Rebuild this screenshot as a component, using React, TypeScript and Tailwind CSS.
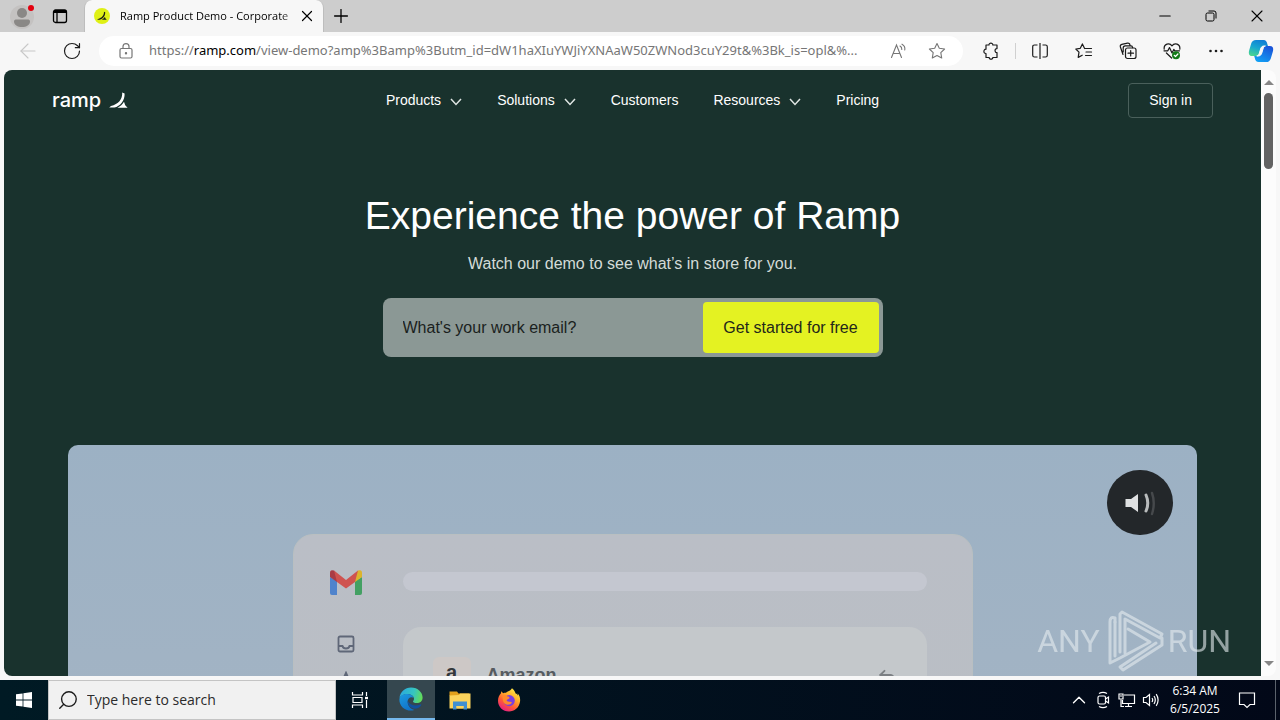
import type { ReactNode } from "react";
import { ArrowLeft, ChevronUp, Minus, Plus, Reply, RotateCw, Search, X } from "lucide-react";

interface NavItem {
  label: string;
  hasMenu: boolean;
}

const navItems: NavItem[] = [
  { label: "Products", hasMenu: true },
  { label: "Solutions", hasMenu: true },
  { label: "Customers", hasMenu: false },
  { label: "Resources", hasMenu: true },
  { label: "Pricing", hasMenu: false },
];

function IconButton({ label, className = "", children }: { label: string; className?: string; children: ReactNode }) {
  return (
    <button type="button" aria-label={label} className={`flex shrink-0 items-center justify-center ${className}`}>
      {children}
    </button>
  );
}

/* The bird-like mark used in the logo and the tab icon */
function RampMark({ className }: { className: string }) {
  return (
    <svg viewBox="0 0 19 17" className={className} fill="currentColor" aria-hidden="true">
      <path d="M13.2 0.6L15.6 1.4C16 8.6 11 14 5.4 15.6H0.2L2 14C9.4 12.4 13.6 7.4 13.2 0.6Z" />
      <path d="M15 9.8L16.2 13.2L18.6 15.8H8.4C11.4 14.4 13.6 12.4 15 9.8Z" />
    </svg>
  );
}

function TabBar() {
  return (
    <div className="flex h-8 shrink-0 items-stretch bg-[#cdcdcd] text-black">
      <IconButton label="Profile" className="w-11">
        <svg viewBox="0 0 28 28" className="h-7 w-7" aria-hidden="true">
          <circle cx="14" cy="15" r="12" fill="#c4c2c1" />
          <circle cx="14" cy="11" r="5" fill="#8a8886" />
          <path d="M6 19.5C6 18 7 17.5 8.5 17.5H19.5C21 17.5 22 18 22 19.5C22 23 18.5 25 14 25S6 23 6 19.5Z" fill="#8a8886" />
          <circle cx="23" cy="6" r="3" fill="#e3000f" />
        </svg>
      </IconButton>
      <IconButton label="Tab actions" className="w-8">
        <svg viewBox="0 0 16 16" className="h-4 w-4" fill="none" stroke="currentColor" aria-hidden="true">
          <rect x="1.5" y="2" width="13" height="12.5" rx="2" strokeWidth="1.3" />
          <path d="M2 3.5H14" strokeWidth="3" />
          <path d="M5 4V14" strokeWidth="1.3" />
        </svg>
      </IconButton>
      <div className="ml-2 flex w-60 items-center rounded-t-lg border-x border-[#bdbdbd] bg-[#f7f7f7] pl-[9px] pr-1">
        <span className="flex h-4 w-4 shrink-0 items-center justify-center rounded-full bg-[#dff016]">
          <RampMark className="h-2.5 w-2.5 text-[#1a1a1a]" />
        </span>
        <span className="ml-2.5 flex-1 whitespace-nowrap bg-linear-to-r from-black from-90% to-[#c0c0c0] bg-clip-text text-[11px] text-transparent">
          Ramp Product Demo - Corporate
        </span>
        <IconButton label="Close tab" className="h-6 w-6">
          <X className="h-[18px] w-[18px]" strokeWidth={1.6} />
        </IconButton>
      </div>
      <IconButton label="New tab" className="ml-px w-8">
        <Plus className="h-[22px] w-[22px]" strokeWidth={1.4} />
      </IconButton>
      <div className="ml-auto flex">
        <IconButton label="Minimize" className="w-[46px]">
          <Minus className="h-[18px] w-[18px]" strokeWidth={1.4} />
        </IconButton>
        <IconButton label="Restore" className="w-[46px]">
          <svg viewBox="0 0 12 12" className="h-3 w-3" fill="none" stroke="currentColor" aria-hidden="true">
            <rect x="1" y="3" width="8" height="8" rx="1.5" />
            <path d="M3.5 1H9Q11 1 11 3V8.5" />
          </svg>
        </IconButton>
        <IconButton label="Close window" className="w-[46px]">
          <X className="h-5 w-5" strokeWidth={1.3} />
        </IconButton>
      </div>
    </div>
  );
}

function StarOutline({ className, lines = false }: { className: string; lines?: boolean }) {
  return (
    <svg viewBox="0 0 18 18" className={className} fill="none" stroke="currentColor" strokeLinejoin="round" strokeLinecap="round" aria-hidden="true">
      {lines ? (
        <path d="M9.6 6.5L7.4 1.9L5.3 6.3L0.8 7L4 10.2L3.2 15.4L7.2 13.2M9.6 6.5H16.5M11 10H16.5M10.5 13.5H16.5" strokeWidth="1.2" />
      ) : (
        <path d="M9 1.5L11.3 6.3L16.6 7L12.8 10.7L13.7 16L9 13.5L4.3 16L5.2 10.7L1.4 7L6.7 6.3Z" strokeWidth="1.1" />
      )}
    </svg>
  );
}

function CopilotLogo() {
  return (
    <svg viewBox="0 0 26 24" className="h-6 w-[26px]" aria-hidden="true">
      <defs>
        <linearGradient id="copilotLeft" x1="0.6" y1="0" x2="0.2" y2="1">
          <stop offset="0" stopColor="#0f7fd6" />
          <stop offset="0.5" stopColor="#18a8cf" />
          <stop offset="1" stopColor="#4bd68f" />
        </linearGradient>
        <linearGradient id="copilotRight" x1="0.8" y1="0" x2="0.2" y2="1">
          <stop offset="0" stopColor="#1a52d8" />
          <stop offset="1" stopColor="#12a2f5" />
        </linearGradient>
      </defs>
      <path d="M8 1H15.5C18 1 18.8 3 19.4 5.2L20 7H16C13.8 7 13 8.6 12.4 10.8L11.2 14.8C10.6 16.6 9.6 17 8 17H4C0.8 17 0.4 14 1.2 11.2L3.2 4.6C4 2.2 5.4 1 8 1Z" fill="url(#copilotLeft)" />
      <path d="M18 23H10.8C8.2 23 7.4 21.4 6.8 19L6.2 17H10C12.2 17 13 15.6 13.6 13.4L14.8 9.2C15.4 7.4 16.4 7 18 7H22C25.4 7 25.6 10 24.8 12.8L22.8 19.4C22 21.8 20.6 23 18 23Z" fill="url(#copilotRight)" />
      <path d="M16 7H17.4C16 7.4 15.4 8.4 15 10L13.8 14C13.2 16 12 17 10 17H8.8C10.2 16.8 10.8 15.8 11.2 14.6L12.6 10C13.2 8 14.2 7 16 7Z" fill="#f7f7f7" stroke="#f7f7f7" />
    </svg>
  );
}

function Toolbar() {
  return (
    <div className="flex h-[38px] shrink-0 items-center bg-[#f7f7f7] text-[#1b1b1b]">
      <IconButton label="Back" className="ml-1.5 w-11 text-[#c8c8c8]">
        <ArrowLeft className="h-6 w-6" strokeWidth={1.1} />
      </IconButton>
      <IconButton label="Refresh" className="w-11">
        <RotateCw className="h-5 w-5" strokeWidth={1.4} />
      </IconButton>
      <div className="ml-[5px] flex h-[30px] min-w-0 flex-1 items-center rounded-full bg-white pl-[18px] pr-2 text-[#767676]">
        <svg viewBox="0 0 18 18" className="h-[18px] w-[18px] shrink-0" fill="none" stroke="currentColor" strokeWidth="1.2" aria-hidden="true">
          <rect x="3" y="6.5" width="12" height="9.5" rx="1.5" />
          <path d="M6 6.5V4.5C6 0.6 12 0.6 12 4.5V6.5" />
          <circle cx="9" cy="11.2" r="0.6" fill="currentColor" />
        </svg>
        <div className="ml-3.5 min-w-0 flex-1 overflow-hidden whitespace-nowrap font-['Noto_Sans',sans-serif] text-[13px]">
          https://<span className="text-black">ramp.com</span>
          /view-demo?amp%3Bamp%3Butm_id=dW1haXIuYWJiYXNAaW50ZWNod3cuY29t&amp;%3Bk_is=opl&amp;%...
        </div>
        <IconButton label="Read aloud" className="h-6 w-10">
          <svg viewBox="0 0 18 18" className="h-[18px] w-[18px]" fill="none" stroke="currentColor" strokeWidth="1.1" strokeLinecap="round" aria-hidden="true">
            <path d="M1.5 15.5L6.5 3L11.5 15.5M3 11.5H10" />
            <path d="M10 4Q12 5 11.8 7.5M12 2.2Q15.4 4 14.8 8" />
          </svg>
        </IconButton>
        <IconButton label="Add to favorites" className="h-6 w-9">
          <StarOutline className="h-[18px] w-[18px]" />
        </IconButton>
      </div>
      <IconButton label="Extensions" className="ml-1.5 w-11">
        <svg viewBox="0 0 18 18" className="h-[18px] w-[18px]" fill="none" stroke="currentColor" strokeWidth="1.2" strokeLinejoin="round" aria-hidden="true">
          <path d="M4 3H7C6.8 0.6 11 0.6 10.8 3H15V6.6C12.4 6.4 12.4 10.8 15 10.6V15.5H10.8C11 17.6 7 17.6 7.2 15.5H4V11.5C1.2 11.8 1.2 7 4 7.2Z" />
        </svg>
      </IconButton>
      <span className="mx-0.5 h-4 w-px bg-[#d0d0d0]" />
      <IconButton label="Split screen" className="w-11">
        <svg viewBox="0 0 18 18" className="h-[18px] w-[18px]" fill="none" stroke="currentColor" strokeWidth="1.2" aria-hidden="true">
          <path d="M6.5 3H3.5Q1.7 3 1.7 4.8V13.2Q1.7 15 3.5 15H6.5M11.5 3H14.5Q16.3 3 16.3 4.8V13.2Q16.3 15 14.5 15H11.5M9 1V17" />
        </svg>
      </IconButton>
      <IconButton label="Favorites" className="w-11">
        <StarOutline className="h-[18px] w-[18px]" lines />
      </IconButton>
      <IconButton label="Collections" className="w-11">
        <svg viewBox="0 0 18 18" className="h-[18px] w-[18px]" fill="none" stroke="currentColor" strokeWidth="1.2" strokeLinecap="round" aria-hidden="true">
          <rect x="6.5" y="6" width="10.5" height="10.5" rx="2" />
          <path d="M11.7 8.5V14M9 11.2H14.5M4 12.5L1.4 5Q0.8 3 2.8 2.4L8.5 1.2Q10.6 0.8 11 3.2M4.2 10V6Q4.2 3.8 6.2 3.8H12Q13.4 3.8 13.6 5.6" />
        </svg>
      </IconButton>
      <IconButton label="Browser essentials" className="w-11">
        <svg viewBox="0 0 18 18" className="h-[18px] w-[18px]" fill="none" stroke="currentColor" strokeWidth="1.2" strokeLinecap="round" strokeLinejoin="round" aria-hidden="true">
          <path d="M1.2 7.2C0.4 1.6 6.6 0.4 9 3.8C11.4 0.4 17.6 1.6 16.8 7.2M1 8.8H4.8L6.5 5.6L9 11L10.8 7.4L11.8 8.8H16.5M3.4 11L8.6 16" />
          <circle cx="13" cy="13.2" r="4" fill="#127a17" stroke="none" />
          <path d="M11.2 13.3L12.5 14.5L14.9 12" stroke="#fff" />
        </svg>
      </IconButton>
      <IconButton label="Settings and more" className="w-11">
        <svg viewBox="0 0 16 4" className="h-1 w-4" fill="currentColor" aria-hidden="true">
          <circle cx="2.5" cy="2" r="1.3" />
          <circle cx="8" cy="2" r="1.3" />
          <circle cx="13.5" cy="2" r="1.3" />
        </svg>
      </IconButton>
      <IconButton label="Copilot" className="w-[42px] pl-1">
        <CopilotLogo />
      </IconButton>
    </div>
  );
}

function SiteHeader() {
  return (
    <header className="grid h-[60px] grid-cols-[1fr_auto_1fr] items-center px-12 text-white">
      <a href="#" aria-label="Ramp home" className="flex items-center gap-2">
        <span className="font-['Inter',sans-serif] text-xl font-medium leading-6">ramp</span>
        <RampMark className="h-[17px] w-[19px]" />
      </a>
      <nav className="flex items-center gap-[35px] text-sm leading-6">
        {navItems.map((item) =>
          item.hasMenu ? (
            <button key={item.label} type="button" className="flex items-center gap-[9px]">
              {item.label}
              <svg viewBox="0 0 12 8" className="mt-1 h-2 w-3" fill="none" stroke="#dfe5e3" strokeWidth="1.5" aria-hidden="true">
                <path d="M1 1L6 6.5L11 1" />
              </svg>
            </button>
          ) : (
            <a key={item.label} href="#">
              {item.label}
            </a>
          ),
        )}
      </nav>
      <a href="#" className="justify-self-end rounded border border-[#4a605b] px-5 py-1.5 text-sm leading-[21px]">
        Sign in
      </a>
    </header>
  );
}

function Hero() {
  return (
    <section className="flex flex-col items-center pt-[62px] text-center">
      <h1 className="text-[39px] leading-[48px] text-white">Experience the power of Ramp</h1>
      <p className="mt-3 text-base leading-6 text-[#d3dbd8]">Watch our demo to see what’s in store for you.</p>
      <form className="mt-[22px] flex w-full max-w-[500px] rounded-lg bg-[#8b9895] p-1" onSubmit={(e) => e.preventDefault()}>
        <input
          type="email"
          aria-label="Work email"
          placeholder="What's your work email?"
          className="min-w-0 flex-1 px-4 text-base text-[#1a1f1d] outline-none placeholder:text-[#1a1f1d]"
        />
        <button type="submit" className="h-[51px] w-44 rounded bg-[#e4f222] text-base text-[#23271a]">
          Get started for free
        </button>
      </form>
    </section>
  );
}

function GmailLogo() {
  return (
    <svg viewBox="0 0 32 26" className="h-[26px] w-8" aria-hidden="true">
      <path d="M0 8L7 12V26H2Q0 26 0 24Z" fill="#4f83cc" />
      <path d="M32 8L25 12V26H30Q32 26 32 24Z" fill="#43a063" />
      <path d="M25 5L28 1.6Q32 0 32 4V8L25 13Z" fill="#dcb42c" />
      <path d="M0 8V4Q0 0 4 1.6L7 5V13Z" fill="#a93c46" />
      <path d="M4 1.6L16 11L28 1.6L25 13L16 19.5L7 13Z" fill="#cf5350" />
    </svg>
  );
}

function DemoVideo() {
  return (
    <section className="relative mx-16 mt-[88px] h-[640px] rounded-[10px] bg-linear-to-b from-[#9cb1c4] to-[#abb7c4]">
      <div className="flex justify-center pt-[89px]">
        <div className="flex h-[500px] w-[680px] rounded-[20px] border border-[#b9bfc1] bg-linear-to-b from-[#babec6] to-[#b9bfc2]">
          <div className="flex w-[109px] flex-col items-center pt-[34px] pr-1">
            <GmailLogo />
            <svg viewBox="0 0 18 18" className="mt-10 h-[18px] w-[18px]" fill="none" stroke="#5f6778" strokeWidth="1.8" aria-hidden="true">
              <rect x="1.5" y="1.5" width="15" height="15" rx="1.5" />
              <path d="M1.5 11H5.5Q6 13.5 9 13.5T12.5 11H16.5" />
            </svg>
            <svg viewBox="0 0 20 20" className="mt-[18px] h-5 w-5" fill="none" stroke="#5f6778" strokeWidth="2" aria-hidden="true">
              <path d="M10 2L12.4 7.4L18 8L13.8 12L15 18L10 15L5 18L6.2 12L2 8L7.6 7.4Z" />
            </svg>
          </div>
          <div className="mr-[45px] flex-1 pt-[37px]">
            <div className="h-[19px] rounded-full bg-[#c4c7d0]" />
            <div className="mt-9 flex h-80 items-start rounded-[18px] bg-[#c4c8cb] px-[30px] pt-[30px]">
              <span className="flex h-[38px] w-[38px] items-start justify-center rounded-md bg-[#cdc8c6] text-xl font-bold leading-[30px] text-[#33373b]">
                a
              </span>
              <span className="ml-4 mt-1 flex-1 text-lg font-bold leading-7 text-[#565b60]">Amazon</span>
              <Reply className="mt-2 h-5 w-5 text-[#7c8084]" strokeWidth={2.2} />
            </div>
          </div>
        </div>
      </div>
      <button
        type="button"
        aria-label="Mute"
        className="absolute right-6 top-[25px] flex h-[65px] w-[66px] items-center justify-center rounded-full bg-[#23272a]"
      >
        <svg viewBox="0 0 32 26" className="h-[26px] w-8" fill="none" strokeLinecap="round" strokeWidth="3" aria-hidden="true">
          <path d="M1.5 9H7L14 4V22L7 17H1.5Z" fill="#dfe1e2" />
          <path d="M22 5Q25.5 13 22 21" stroke="#b9bcbd" />
          <path d="M28 3Q31.5 13 28 24" stroke="#46494c" strokeWidth="2.4" />
        </svg>
      </button>
    </section>
  );
}

/* Sits over the lower right corner of the page */
function Watermark() {
  return (
    <div className="pointer-events-none absolute bottom-1 right-[45px] flex items-center text-[#e6edf0] opacity-60">
      <span className="font-['Roboto',sans-serif] text-[32px] leading-[60px]">ANY</span>
      <svg viewBox="0 0 56 62" className="ml-2 mr-1 h-[62px] w-14" fill="none" stroke="currentColor" strokeWidth="3" strokeLinejoin="round" strokeLinecap="round" aria-hidden="true">
        <path d="M7 12V8Q2 6 2 12V53L12 48L42 32L20 19" />
        <path d="M7 12V46" />
        <path d="M12 42V4L14 2L54 24L52 28L17 9V43" />
        <path d="M54 28V35L15 60L12 57L48 33" />
      </svg>
      <span className="font-['Roboto',sans-serif] text-[32px] leading-[60px]">RUN</span>
    </div>
  );
}

function Scrollbar() {
  return (
    <div className="flex w-[15px] shrink-0 flex-col items-center bg-[#fcfcfc] py-2.5">
      <span className="h-0 w-0 border-x-[5px] border-b-[5px] border-x-transparent border-b-[#868686]" />
      <span className="mt-2 h-[76px] w-[9px] rounded-full bg-[#636363]" />
      <span className="mt-auto h-0 w-0 border-x-[5px] border-t-[5px] border-x-transparent border-t-[#868686]" />
    </div>
  );
}

function EdgeLogo() {
  return (
    <svg viewBox="0 0 24 24" className="h-6 w-6" aria-hidden="true">
      <defs>
        <linearGradient id="edgeTop" x1="0" y1="0.3" x2="1" y2="0.5">
          <stop offset="0" stopColor="#2aa8e0" />
          <stop offset="0.6" stopColor="#36c5c0" />
          <stop offset="1" stopColor="#63dc58" />
        </linearGradient>
        <linearGradient id="edgeLow" x1="0" y1="0" x2="0.5" y2="1">
          <stop offset="0" stopColor="#1c9be0" />
          <stop offset="1" stopColor="#1173c9" />
        </linearGradient>
      </defs>
      <path d="M0.5 11C1.2 4.6 6 0.4 12 0.4C19 0.4 23.6 5.4 23.6 10.4C23.6 14 21 16 17.8 16C15.4 16 13.8 15.2 14 14.4C14.2 13.8 15 13.4 15 11.8C15 9.4 12.4 7 8.6 7C4.6 7 1.6 9 0.5 11Z" fill="url(#edgeTop)" />
      <path d="M0.4 12.4C0.6 8.8 4.4 7 8.2 7C11.4 7 14 8.6 14.6 10.8C11.8 9 8.6 11.2 8.6 14.8C8.6 19 12 22.4 15.4 23C13.8 23.6 12.6 23.6 12 23.6C5.4 23.6 0.2 18.6 0.4 12.4Z" fill="url(#edgeLow)" />
      <path d="M8.8 13.6C8 19 13 22.4 17.6 21.6C19.8 21 21.4 19.4 22.2 18.2C22.6 17.4 22 17 21.4 17.4C15.6 20 9.8 17.6 8.8 13.6Z" fill="#12509d" />
    </svg>
  );
}

function FolderLogo() {
  return (
    <svg viewBox="0 0 22 20" className="h-5 w-[22px]" aria-hidden="true">
      <path d="M0.5 1.5H8L9.5 3.5H20V6H0.5Z" fill="#e2a01c" />
      <path d="M0.5 5.5L10 5L11 3.5H21.5V18.5H0.5Z" fill="#fbd35c" />
      <path d="M4 11.5H18V19.5H14.5V16H7.5V19.5H4Z" fill="#3f8fd0" />
      <path d="M7.5 16H14.5V18.5H7.5Z" fill="#fbd35c" />
    </svg>
  );
}

function FirefoxLogo() {
  return (
    <svg viewBox="0 0 24 24" className="h-6 w-6" aria-hidden="true">
      <defs>
        <linearGradient id="foxBody" x1="0.8" y1="0" x2="0.2" y2="1">
          <stop offset="0" stopColor="#fff04a" />
          <stop offset="0.35" stopColor="#ffb02a" />
          <stop offset="0.65" stopColor="#ff5a36" />
          <stop offset="1" stopColor="#e3158f" />
        </linearGradient>
      </defs>
      <path d="M15 0.2C17.6 2 18.2 4.4 18.6 5.4C19.8 5.6 20.4 6.4 21 7.6L20.6 5.2C23 8 23.4 11 23 13.8C22.2 19.6 17.4 23.6 12 23.6C5.8 23.6 1 18.8 1 12.8C1 9.4 2.2 7 4 5.2L4.2 3.2L6.2 5.2C7 4.8 8 4.8 9 4.8C10.6 2.8 13 3.6 15 0.2Z" fill="url(#foxBody)" />
      <circle cx="12.2" cy="12.6" r="5.6" fill="#7a3fe0" />
      <path d="M5.4 8.4C8 6.4 10 7.8 10.4 8.6C12.4 8.6 13 9.4 12.2 10.4C11 11.4 9.6 11.4 9.6 12.6C10.8 14.4 13.6 13.4 15 14.4C13 17.8 7.2 17.4 6 13Z" fill="#ff8a2b" />
    </svg>
  );
}

function Taskbar() {
  return (
    <footer className="flex h-10 shrink-0 items-stretch bg-linear-to-r from-[#001a24] to-[#020818] text-white">
      <IconButton label="Start" className="w-12">
        <svg viewBox="0 0 16 16" className="h-4 w-4" fill="currentColor" aria-hidden="true">
          <path d="M0 2.3L6.6 1.4V7.5H0ZM7.4 1.3L16 0V7.5H7.4ZM0 8.4H6.6V14.6L0 13.7ZM7.4 8.4H16V16L7.4 14.7Z" />
        </svg>
      </IconButton>
      <label className="flex w-72 items-center border border-[#c4c4c4] bg-[#f1f1f1] pl-2 text-[#1b1b1b]">
        <Search className="h-[22px] w-[22px] -scale-x-100" strokeWidth={1.5} />
        <input
          type="text"
          aria-label="Search"
          placeholder="Type here to search"
          className="ml-2 min-w-0 flex-1 text-sm outline-none placeholder:text-[#2b2b2b]"
        />
      </label>
      <IconButton label="Task view" className="w-12">
        <svg viewBox="0 0 18 18" className="h-[18px] w-[18px]" fill="none" stroke="currentColor" strokeWidth="1.2" aria-hidden="true">
          <path d="M1.5 1V4H11.5V1M1.5 17V14H11.5V17M2 6.5H11V11.5H2ZM15.5 1V5M15.5 9V17" />
          <path d="M14 7H17" strokeWidth="2.4" />
        </svg>
      </IconButton>
      <IconButton label="Microsoft Edge" className="ml-[3px] w-12 border-b-2 border-[#76b9ed] bg-[#35474f]">
        <EdgeLogo />
      </IconButton>
      <IconButton label="File Explorer" className="ml-px w-12">
        <FolderLogo />
      </IconButton>
      <IconButton label="Firefox" className="ml-px w-12">
        <FirefoxLogo />
      </IconButton>
      <div className="ml-auto flex items-stretch">
        <IconButton label="Show hidden icons" className="w-6">
          <ChevronUp className="h-[22px] w-[22px]" strokeWidth={1.5} />
        </IconButton>
        <IconButton label="Meet now" className="w-6">
          <svg viewBox="0 0 16 18" className="h-[18px] w-4" fill="none" stroke="currentColor" strokeWidth="1.2" aria-hidden="true">
            <rect x="3" y="5" width="7.5" height="8" rx="1.5" />
            <path d="M10.5 8L13.5 6V12L10.5 10M4 2.5Q8 0.2 12 2.5M4 15.5Q8 17.8 12 15.5" />
          </svg>
        </IconButton>
        <IconButton label="Network" className="w-6">
          <svg viewBox="0 0 18 16" className="h-4 w-[18px]" fill="none" stroke="currentColor" strokeWidth="1.2" aria-hidden="true">
            <path d="M6 3H16.5V11.5H4.5V8M10.5 11.5V14.5M7 14.5H14M3 7.5V14.5H6" />
            <path d="M1 2H5V7H1ZM2 4H4" />
          </svg>
        </IconButton>
        <IconButton label="Volume" className="w-6">
          <svg viewBox="0 0 18 16" className="h-4 w-[18px]" fill="none" stroke="currentColor" strokeWidth="1.2" aria-hidden="true">
            <path d="M1.5 5.5H4L7.5 2.5V13.5L4 10.5H1.5ZM10 6Q11.4 8 10 10M12 4Q14.6 8 12 12M14.2 2.2Q18 8 14.2 13.8" />
          </svg>
        </IconButton>
        <div className="flex w-16 flex-col items-center justify-center text-xs leading-[18px]">
          <span className="whitespace-nowrap">6:34 AM</span>
          <span>6/5/2025</span>
        </div>
        <IconButton label="Notifications" className="w-10">
          <svg viewBox="0 0 18 18" className="h-[18px] w-[18px]" fill="none" stroke="currentColor" strokeWidth="1.2" aria-hidden="true">
            <path d="M1.5 2H16.5V13.5H12L9 16.5L6 13.5H1.5Z" />
          </svg>
        </IconButton>
        <span className="ml-2 w-[5px] border-l border-[#5b626c]" />
      </div>
    </footer>
  );
}

export default function App() {
  return (
    <div className="flex h-screen flex-col overflow-hidden bg-[#f7f7f7] font-['Open_Sans','Noto_Sans',sans-serif]">
      <TabBar />
      <Toolbar />
      <div className="relative mx-1 mb-1 flex min-h-0 flex-1 overflow-hidden rounded-lg">
        <main className="min-w-0 flex-1 overflow-hidden bg-[#19322d] font-['Liberation_Sans',Arial,sans-serif]">
          <SiteHeader />
          <Hero />
          <DemoVideo />
        </main>
        <Scrollbar />
        <Watermark />
      </div>
      <Taskbar />
    </div>
  );
}
